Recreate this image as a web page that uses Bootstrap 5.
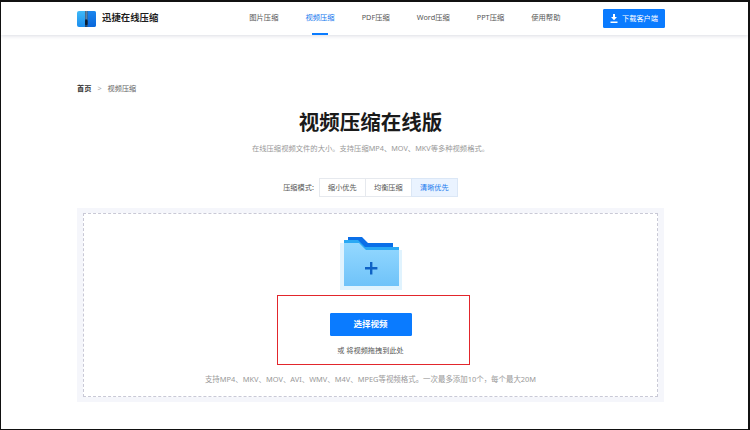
<!DOCTYPE html>
<html lang="zh-CN">
<head>
  <meta charset="UTF-8">
  <meta name="viewport" content="width=device-width, initial-scale=1">
  <title>视频压缩在线版</title>
  <link href="https://cdn.jsdelivr.net/npm/bootstrap@5.3.3/dist/css/bootstrap.min.css" rel="stylesheet">
  <script src="https://cdn.jsdelivr.net/npm/bootstrap@5.3.3/dist/js/bootstrap.bundle.min.js"></script>
  <style>
    html, body { height: 100%; }
    body {
      font-family: "Noto Sans", "Noto Sans CJK SC", sans-serif;
      overflow: hidden;
      background: #fff;
    }
    .frame { height: 430px; border: 1px solid #111; border-top-width: 2px; border-right-width: 2px; overflow: hidden; }
    .top-bar { height: 33px; padding: 0; box-shadow: 0 1px 4px rgba(30, 40, 80, .16); background: #fff; }
    .top-inner { width: 588px; margin-left: 76px; height: 100%; }
    .logo-text { font-size: 9.4px; font-weight: 700; color: #1c1c1c; margin-left: 6px; }
    .top-nav { gap: 27px; margin-left: 91px; }
    .top-nav .nav-link { font-size: 7.3px; color: #555; padding: 0; height: 33px; line-height: 31px; position: relative; }
    .top-nav .nav-link.active { color: #1677ee; }
    .top-nav .nav-link.active::after {
      content: ""; position: absolute; left: 7px; right: 7px; bottom: 0; height: 2px; background: #0a7bff;
    }
    .dl-btn {
      font-size: 7.2px; width: 62px; height: 19px; padding: 0; border-radius: 1px; background: #0a7bff; border-color: #0a7bff;
      margin-left: auto;
    }
    .page-body { width: 587px; margin-left: 76px; }
    .crumbs { margin: 48px 0 0; font-size: 7.2px; line-height: 11px; --bs-breadcrumb-divider: ">"; --bs-breadcrumb-item-padding-x: 6px; }
    .crumbs .breadcrumb-item:first-child { color: #333; font-weight: 700; }
    .crumbs .breadcrumb-item.active { color: #666; }
    .crumbs .breadcrumb-item + .breadcrumb-item::before { color: #aaa; }
    .main-title { font-size: 20.5px; font-weight: 700; color: #1a1a1a; line-height: 28px; margin: 14px 0 0; }
    .sub-title { font-size: 7.3px; color: #999; line-height: 11px; margin: 7px 0 0; }
    .mode-row { margin-top: 23px; height: 20px; font-size: 7.2px; }
    .mode-label { color: #555; margin-right: 5px; }
    .mode-group .btn {
      width: 47px; height: 19px; padding: 0; font-size: 7.2px; color: #555; background: #fff;
      border-color: #e6e9ee; border-radius: 0;
    }
    .mode-group .btn.active { color: #1677ee; background: #eaf3ff; border-color: #dbe7f6; }
    .drop-outer { margin-top: 11px; height: 194px; padding: 5px 6px; background: #f5f6fb; }
    .drop-inner { height: 100%; background: #fff; border: 1px dashed #c9c9d6; position: relative; }
    .folder-icon { width: 62px; height: 54px; margin-top: 22px; display: block; }
    .pick-btn {
      width: 82px; height: 23px; padding: 0; margin-top: 23px; font-size: 8.5px; font-weight: 700;
      border-radius: 1px; background: #0a7bff; border-color: #0a7bff;
    }
    .drop-hint { font-size: 7.2px; color: #555; line-height: 11px; margin: 9px 0 0; }
    .format-note { font-size: 7.45px; color: #999; line-height: 11px; margin: 18px 0 0; white-space: nowrap; }
    .red-mark { position: absolute; left: 193px; top: 81px; width: 193px; height: 70px; border: 1px solid #e2262c; pointer-events: none; }
  </style>
</head>
<body>
  <div class="frame">
    <nav class="navbar top-bar">
      <div class="top-inner d-flex align-items-center">
        <svg width="19" height="16" viewBox="0 0 19 16" aria-hidden="true">
          <defs>
            <linearGradient id="logoL" x1="0" y1="0" x2="0" y2="1">
              <stop offset="0" stop-color="#3fb9f7"/><stop offset="1" stop-color="#1b8dee"/>
            </linearGradient>
            <linearGradient id="logoR" x1="0" y1="0" x2="0" y2="1">
              <stop offset="0" stop-color="#1b86ee"/><stop offset="1" stop-color="#0a66da"/>
            </linearGradient>
          </defs>
          <rect x="0" y="0" width="19" height="16" rx="2" fill="url(#logoL)"/>
          <path d="M10.5 0H17a2 2 0 0 1 2 2v12a2 2 0 0 1-2 2h-6.500z" fill="url(#logoR)"/>
          <rect x="8" y="0" width="2.600" height="16" fill="#24476e"/>
          <path d="M8.400 1h1.800M8.400 3h1.800M8.400 5h1.800M8.400 7h1.800" stroke="#d6e9f9" stroke-width=".7"/>
          <rect x="8" y="9" width="2.600" height="5" rx=".8" fill="#0c1c30"/>
        </svg>
        <span class="logo-text">迅捷在线压缩</span>
        <ul class="nav top-nav">
          <li class="nav-item"><a class="nav-link" href="#">图片压缩</a></li>
          <li class="nav-item"><a class="nav-link active" href="#">视频压缩</a></li>
          <li class="nav-item"><a class="nav-link" href="#">PDF压缩</a></li>
          <li class="nav-item"><a class="nav-link" href="#">Word压缩</a></li>
          <li class="nav-item"><a class="nav-link" href="#">PPT压缩</a></li>
          <li class="nav-item"><a class="nav-link" href="#">使用帮助</a></li>
        </ul>
        <a href="#" class="btn btn-primary dl-btn d-flex align-items-center justify-content-center gap-1">
          <svg width="8" height="9" viewBox="0 0 8 9" aria-hidden="true">
            <path d="M3 0h2v3h2L4 6.200 1 3h2zM.5 7.600h7V9h-7z" fill="#fff"/>
          </svg>
          下载客户端
        </a>
      </div>
    </nav>

    <div class="page-body">
      <ol class="breadcrumb crumbs">
        <li class="breadcrumb-item">首页</li>
        <li class="breadcrumb-item active">视频压缩</li>
      </ol>

      <h1 class="main-title text-center">视频压缩在线版</h1>
      <p class="sub-title text-center">在线压缩视频文件的大小。支持压缩MP4、MOV、MKV等多种视频格式。</p>

      <div class="mode-row d-flex justify-content-center align-items-center">
        <span class="mode-label">压缩模式:</span>
        <div class="btn-group mode-group" role="group">
          <button type="button" class="btn">缩小优先</button>
          <button type="button" class="btn">均衡压缩</button>
          <button type="button" class="btn active">清晰优先</button>
        </div>
      </div>

      <div class="drop-outer">
        <div class="drop-inner d-flex flex-column align-items-center">
          <svg class="folder-icon" viewBox="0 0 62 54" aria-hidden="true">
            <defs>
              <linearGradient id="folderFill" x1="0" y1="0" x2="0" y2="1">
                <stop offset="0" stop-color="#94d8ff"/><stop offset="1" stop-color="#6fc3f9"/>
              </linearGradient>
            </defs>
            <path d="M0 7h19l7 7h36v40H0z" fill="#e0f3fe"/>
            <path d="M8 1h14l6 6h25v6H8z" fill="#0a6fe8"/>
            <path d="M4 4h14l7 7h34v5H4z" fill="#2aa9f4"/>
            <path d="M4 7h15l7 7h33v36H4z" fill="url(#folderFill)"/>
            <path d="M30 26h2.400v5h5v2.400h-5v5H30v-5h-5V31h5z" fill="#0f62c5"/>
          </svg>
          <button type="button" class="btn btn-primary pick-btn">选择视频</button>
          <p class="drop-hint">或 将视频拖拽到此处</p>
          <p class="format-note">支持MP4、MKV、MOV、AVI、WMV、M4V、MPEG等视频格式。一次最多添加10个，每个最大20M</p>
          <div class="red-mark"></div>
        </div>
      </div>
    </div>
  </div>
</body>
</html>
